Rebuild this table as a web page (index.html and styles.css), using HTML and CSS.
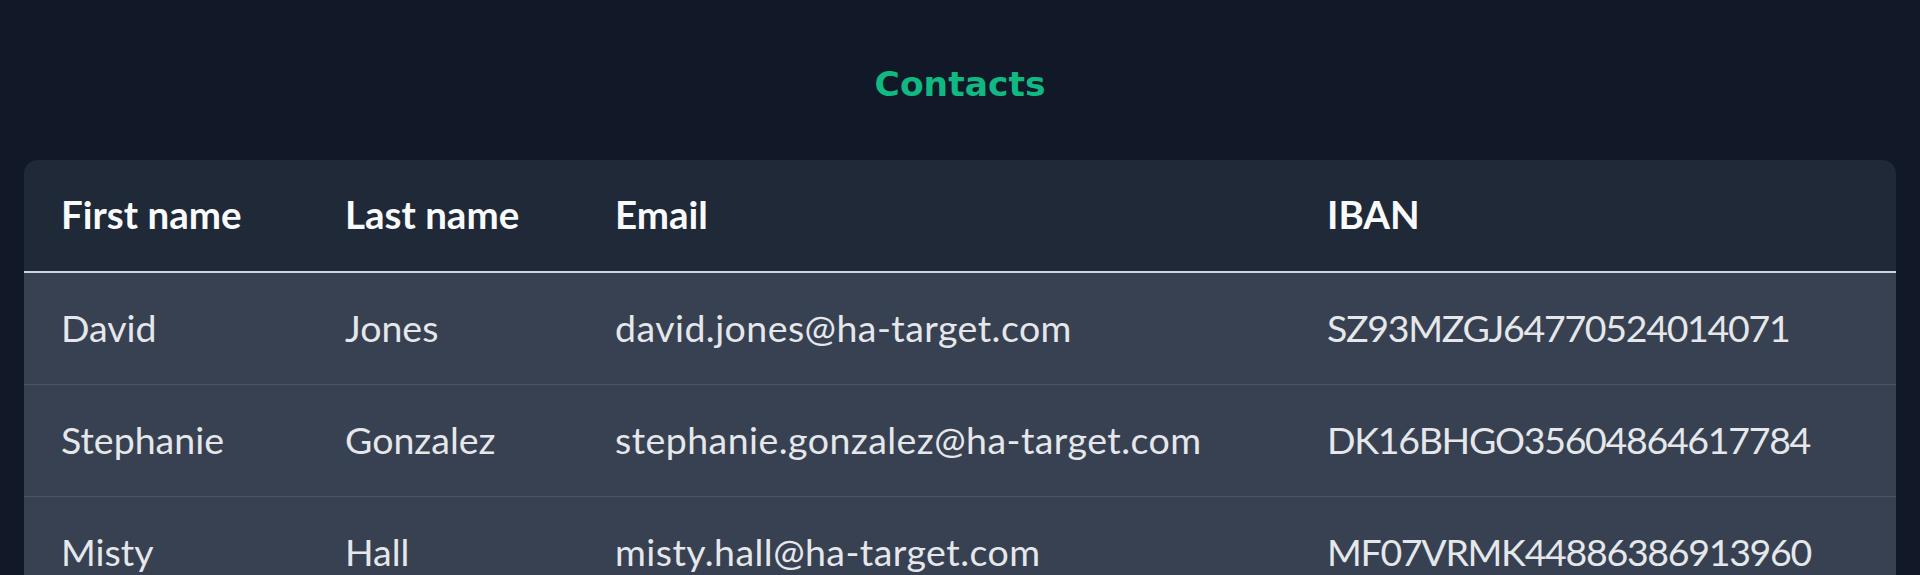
FILE: index.html
```html
<!DOCTYPE html>
<html lang="en">

<head>
    <meta charset="UTF-8">
    <meta name="viewport" content="width=device-width, initial-scale=1.0">
    <title>Contacts</title>

    <link rel="stylesheet" href="styles.css">
</head>

<body>
    <div class="page">
        <h1 class="page__title">Contacts</h1>

        <div class="card">
            <table class="contacts">
                <colgroup>
                    <col class="contacts__col-first">
                    <col class="contacts__col-last">
                    <col class="contacts__col-email">
                    <col>
                </colgroup>
                <thead>
                    <tr>
                        <th>First name</th>
                        <th>Last name</th>
                        <th>Email</th>
                        <th>IBAN</th>
                    </tr>
                </thead>
                <tbody>
                    <tr>
                        <td>David</td>
                        <td>Jones</td>
                        <td class="contacts__email">david.jones@ha-target.com</td>
                        <td class="contacts__iban">SZ93MZGJ64770524014071</td>
                    </tr>
                    <tr>
                        <td>Stephanie</td>
                        <td>Gonzalez</td>
                        <td class="contacts__email">stephanie.gonzalez@ha-target.com</td>
                        <td class="contacts__iban">DK16BHGO35604864617784</td>
                    </tr>
                    <tr>
                        <td>Misty</td>
                        <td>Hall</td>
                        <td class="contacts__email">misty.hall@ha-target.com</td>
                        <td class="contacts__iban">MF07VRMK44886386913960</td>
                    </tr>
                </tbody>
            </table>
        </div>
    </div>
</body>

</html>
```

FILE: styles.css
```css
body {
    margin: 0;
    background-color: #111827;
    color: #f3f4f6;
    font-family: "Lato", "Noto Sans", sans-serif;
}

.page {
    padding: 64px 24px 0;
}

.page__title {
    margin: 0 0 56px;
    text-align: center;
    font-family: "DejaVu Sans", "Lato", sans-serif;
    font-size: 34.5px;
    line-height: 40px;
    font-weight: bold;
    color: #10b981;
}

.card {
    background-color: #1f2937;
    border-radius: 14px 14px 0 0;
    overflow: hidden;
}

.contacts {
    width: 100%;
    border-collapse: collapse;
    table-layout: fixed;
}

.contacts__col-first {
    width: 284px;
}

.contacts__col-last {
    width: 270px;
}

.contacts__col-email {
    width: 712px;
}

.contacts th {
    text-align: left;
    padding: 31px 37px 34px;
    font-size: 38.5px;
    line-height: 46px;
    font-weight: bold;
    color: #f9fafb;
    white-space: nowrap;
}

.contacts thead tr {
    border-bottom: 2px solid #d1d5db;
}

.contacts tbody tr {
    background-color: #374151;
    border-bottom: 1px solid #4b5563;
}

.contacts td {
    padding: 32px 37px 34px;
    font-size: 37.5px;
    line-height: 45px;
    color: #e5e7eb;
    white-space: nowrap;
}

.contacts__email {
    letter-spacing: 0.45px;
}

.contacts__iban {
    letter-spacing: -1.3px;
}
```
